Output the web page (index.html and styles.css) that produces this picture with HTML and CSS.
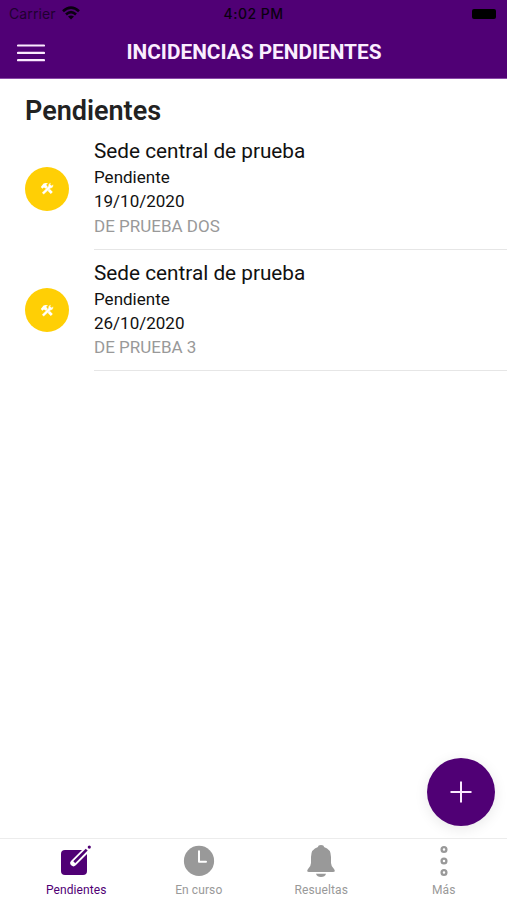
FILE: index.html
```html
<!DOCTYPE html>
<html lang="es">
<head>
<meta charset="utf-8">
<title>Incidencias pendientes</title>
<link rel="stylesheet" href="styles.css">
</head>
<body>
<div class="app">
  <header class="header">
    <div class="status">
      <div class="carrier"><span>Carrier</span>
        <svg class="wifi" width="18" height="14" viewBox="0 0 18 14"><g fill="none" stroke="#0a0010" stroke-width="2.7"><path d="M1 5.2Q9-2 17 5.2"/><path d="M4 8.4Q9 3.8 14 8.4"/></g><path d="M9 13.6 6 10.6Q9 8.2 12 10.6Z" fill="#0a0010"/></svg>
      </div>
      <span class="time">4:02 PM</span>
      <span class="battery-box"><i class="battery"></i></span>
    </div>
    <div class="toolbar">
      <svg class="menu" width="28" height="20" viewBox="0 0 28 20"><path d="M1 2.5h26M1 9.9h26M1 17.2h26" stroke="#fbeaff" stroke-width="2.2" stroke-linecap="round"/></svg>
      <h1 class="title">INCIDENCIAS PENDIENTES</h1>
    </div>
  </header>
  <main class="content">
    <h2 class="heading">Pendientes</h2>
    <article class="item">
      <div class="avatar"><svg width="14" height="13" viewBox="0 0 14 13"><path d="M.8 5 3.6 1.6Q5 .5 8 1.3L6.2 2.8 7 4 12.8 10 10.8 12 5 5.9 3.8 5.4 2.4 6.8Z" fill="#fff"/><path d="M1.8 10.7 8.2 4.6Q8 1.5 11 .8L10.4 2.8 11.4 3.6 13.2 2.5Q13.7 6.3 10.2 6.4L3.8 12.4Z" fill="#fff" stroke="#ffcf05" stroke-width=".3"/></svg></div>
      <div class="details">
        <h3 class="name">Sede central de prueba</h3>
        <p class="line">Pendiente</p>
        <p class="line">19/10/2020</p>
        <p class="line note">DE PRUEBA DOS</p>
      </div>
    </article>
    <article class="item">
      <div class="avatar"><svg width="14" height="13" viewBox="0 0 14 13"><path d="M.8 5 3.6 1.6Q5 .5 8 1.3L6.2 2.8 7 4 12.8 10 10.8 12 5 5.9 3.8 5.4 2.4 6.8Z" fill="#fff"/><path d="M1.8 10.7 8.2 4.6Q8 1.5 11 .8L10.4 2.8 11.4 3.6 13.2 2.5Q13.7 6.3 10.2 6.4L3.8 12.4Z" fill="#fff" stroke="#ffcf05" stroke-width=".3"/></svg></div>
      <div class="details">
        <h3 class="name">Sede central de prueba</h3>
        <p class="line">Pendiente</p>
        <p class="line">26/10/2020</p>
        <p class="line note">DE PRUEBA 3</p>
      </div>
    </article>
  </main>
  <button class="fab" aria-label="Nueva incidencia"><svg width="22" height="22" viewBox="0 0 22 22"><path d="M11 .5v21M.5 11h21" stroke="#fbeaff" stroke-width="2"/></svg></button>
  <nav class="tabs">
    <a class="tab active">
      <svg width="32" height="32" viewBox="0 0 32 32"><rect x="1" y="5" width="26" height="25" rx="4" fill="#500075"/><path d="M13.5 18 26 5.5" stroke="#fff" stroke-width="6.4" stroke-linecap="round"/><path d="M14.2 17.3 26.7 4.6" stroke="#500075" stroke-width="2.7"/><path d="m11.2 20.2 1.5-4 2.6 2.5Z" fill="#fff"/><circle cx="29.3" cy="2.1" r="1.6" fill="#500075"/></svg>
      <span>Pendientes</span>
    </a>
    <a class="tab">
      <svg width="32" height="32" viewBox="0 0 32 32"><circle cx="16" cy="15.9" r="15.1" fill="#999"/><path d="M16 6.3v10.5h7" fill="none" stroke="#fff" stroke-width="2" stroke-linecap="round" stroke-linejoin="round"/></svg>
      <span>En curso</span>
    </a>
    <a class="tab">
      <svg width="32" height="32" viewBox="0 0 32 32"><path d="M13 2Q13 0 16 0T19 2Q26 4 26 12V18Q26 21 29 24Q31 27 28 27H4Q1 27 3 24Q6 21 6 18V12Q6 4 13 2Z" fill="#999"/><path d="M11 28.7h10Q20 32 16 32T11 28.7Z" fill="#999"/></svg>
      <span>Resueltas</span>
    </a>
    <a class="tab">
      <svg width="32" height="32" viewBox="0 0 32 32"><g fill="#fff" stroke="#999" stroke-width="2.3"><circle cx="16" cy="4.5" r="2.4"/><circle cx="16" cy="16" r="2.4"/><circle cx="16" cy="27.5" r="2.4"/></g></svg>
      <span>Más</span>
    </a>
  </nav>
</div>
</body>
</html>
```
FILE: styles.css
```css
* { box-sizing: border-box; }
body { margin: 0; background: #fff; font-family: Roboto, sans-serif; color: #111; }
h1, h2, h3, p { margin: 0; }
svg { display: block; flex: none; }
.app { position: relative; display: flex; flex-direction: column; height: 900px; overflow: hidden; }
.header { height: 79px; background: #500075; border-bottom: 1px solid #8a4aa8; }
.status { display: grid; grid-template-columns: 1fr auto 1fr; align-items: center; height: 27px; padding: 0 11px 0 11px; font: 14px/27px Inter, sans-serif; color: #0a0010; }
.carrier { display: flex; align-items: center; gap: 6px; margin-left: -2px; letter-spacing: .1px; color: #1f0030; }
.wifi { margin-top: -1px; }
.time { font-weight: 500; letter-spacing: .5px; }
.battery-box { display: flex; justify-content: flex-end; }
.battery { width: 24px; height: 10px; border-radius: 2px; background: #000; }
.toolbar { display: grid; grid-template-columns: 28px 1fr 28px; align-items: center; height: 51px; padding: 0 16px 0 17px; }
.title { text-align: center; font-size: 20.8px; line-height: 24px; margin-top: -1px; font-weight: 700; color: #fbeeff; white-space: nowrap; }
.content { flex: 1; padding-top: 15px; }
.heading { padding-left: 25px; font-size: 27px; line-height: 34px; font-weight: 600; color: #222; }
.item { display: flex; align-items: center; height: 121.5px; padding-left: 25px; }
.avatar { display: flex; align-items: center; justify-content: center; width: 44px; height: 44px; margin-right: 25px; border-radius: 50%; background: #ffcf05; }
.details { flex: 1; height: 100%; padding-top: 10px; border-bottom: 1px solid #e6e6e6; }
.name { font-size: 20.75px; line-height: 27px; font-weight: 400; }
.line { font-size: 17px; line-height: 24.3px; }
.note { color: #999; }
.fab { position: absolute; right: 12.5px; top: 758px; display: flex; align-items: center; justify-content: center; width: 68px; height: 68px; padding: 0; border: 0; border-radius: 50%; background: #500075; box-shadow: 0 3px 14px rgba(0, 0, 0, .09); }
.tabs { position: relative; display: flex; height: 62px; padding: 6px 2px 0 15px; border-top: 1px solid #ececec; background: #fff; }
.tab { flex: 1; display: flex; flex-direction: column; align-items: center; font-size: 12px; line-height: 14px; letter-spacing: .1px; color: #999; }
.tab span { margin-top: 6px; }
.active { color: #500075; }
```
